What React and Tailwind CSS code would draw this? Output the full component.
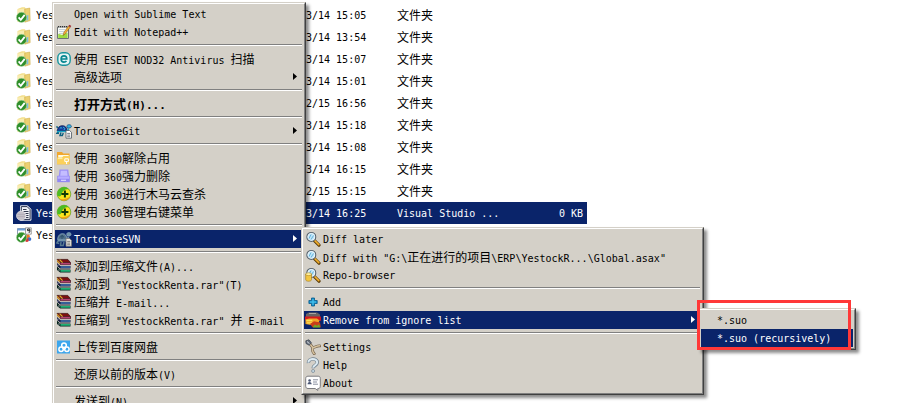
import React from 'react';
import clsx from 'clsx';

const archivos = [
    {fecha: '3/14 15:05', tipo: '文件夹'},
    {fecha: '3/14 13:54', tipo: '文件夹'},
    {fecha: '3/14 15:07', tipo: '文件夹'},
    {fecha: '3/14 15:01', tipo: '文件夹'},
    {fecha: '2/15 16:56', tipo: '文件夹'},
    {fecha: '3/14 15:18', tipo: '文件夹'},
    {fecha: '3/14 15:08', tipo: '文件夹'},
    {fecha: '3/14 16:15', tipo: '文件夹'},
    {fecha: '2/15 15:15', tipo: '文件夹'},
    {fecha: '3/14 16:25', tipo: 'Visual Studio ...', peso: '0 KB', icono: 'suo', activo: true},
    {fecha: '', tipo: '', icono: 'sln'},
];

const menuPrincipal = [
    {texto: 'Open with Sublime Text'},
    {texto: 'Edit with Notepad++', icono: 'notepad'},
    null,
    {texto: '使用 ESET NOD32 Antivirus 扫描', icono: 'eset'},
    {texto: '高级选项', flecha: true},
    null,
    {texto: '打开方式(H)...', negrita: true},
    null,
    {texto: 'TortoiseGit', icono: 'git', flecha: true},
    null,
    {texto: '使用 360解除占用', icono: 'carpeta360'},
    {texto: '使用 360强力删除', icono: 'borrar360'},
    {texto: '使用 360进行木马云查杀', icono: 'escudo360'},
    {texto: '使用 360管理右键菜单', icono: 'escudo360'},
    null,
    {texto: 'TortoiseSVN', icono: 'svn', flecha: true, activo: true},
    null,
    {texto: '添加到压缩文件(A)...', icono: 'rar'},
    {texto: '添加到 "YestockRenta.rar"(T)', icono: 'rar'},
    {texto: '压缩并 E-mail...', icono: 'rar'},
    {texto: '压缩到 "YestockRenta.rar" 并 E-mail', icono: 'rar'},
    null,
    {texto: '上传到百度网盘', icono: 'baidu'},
    null,
    {texto: '还原以前的版本(V)'},
    null,
    {texto: '发送到(N)', flecha: true},
];

const menuSvn = [
    {texto: 'Diff later', icono: 'lupa'},
    {texto: 'Diff with "G:\\正在进行的项目\\ERP\\YestockR...\\Global.asax"', icono: 'lupa'},
    {texto: 'Repo-browser', icono: 'repo'},
    null,
    {texto: 'Add', icono: 'agregar'},
    {texto: 'Remove from ignore list', icono: 'ignorar', flecha: true, activo: true},
    null,
    {texto: 'Settings', icono: 'ajustes'},
    {texto: 'Help', icono: 'ayuda'},
    {texto: 'About', icono: 'acerca'},
];

const menuIgnorar = [
    {texto: '*.suo'},
    {texto: '*.suo (recursively)', activo: true},
];

const marcaVerde = (
    <>
        <circle cx="5.5" cy="10.4" r="5.1" fill="#2f8f2b" stroke="#b5d8a8" strokeWidth=".5"/>
        <path d="M2.6 10.4l2.2 2.5 3.9-5" fill="none" stroke="#fff" strokeWidth="1.8"/>
    </>
);

const lupa = (
    <>
        <path d="M9.4 9.6l4.6 4.6" stroke="#5b3c08" strokeWidth="3.2" strokeLinecap="round"/>
        <path d="M9.8 9.6l4 4" stroke="#f0ae2c" strokeWidth="1.6" strokeLinecap="round"/>
        <circle cx="6.3" cy="5.9" r="4.4" fill="#bfe4f7" stroke="#59646e" strokeWidth="1.2"/>
        <circle cx="6.3" cy="5.9" r="3.5" fill="none" stroke="#f5fbff" strokeWidth=".8"/>
        <path d="M4 7.5l2-4M6 8.5l2.5-4" stroke="#5aaed8" strokeWidth=".9"/>
    </>
);

const dibujos = {
    carpeta: (
        <>
            <path d="M1.5 2L6 .3h3l.7 1.7v11L5 15H1.5z" fill="#f3df8c"/>
            <path d="M2 2.5L8 1.5v12.5l-6 .5z" fill="#f8ecb0"/>
            <path d="M8.8 2l5-1 .4 12.6-5.4 1.6z" fill="#ecd071" stroke="#c9a844" strokeWidth=".5"/>
            <path d="M10.5 8.5l1.8-.6v5l-1.8.8z" fill="#7dbde0"/>
            {marcaVerde}
        </>
    ),
    suo: (
        <>
            <path d="M4.5.8h7L15 4.3v10.9H4.5z" fill="#d8dbe6" stroke="#fff" strokeWidth=".8"/>
            <path d="M5.3 1.6h5.8l3 3v9.8H5.3z" fill="#f2f3f8" stroke="#29324f" strokeWidth="1"/>
            <path d="M7 4.5h3.5M7 6.5h5.5M9 8.5h3.5M10 10.5h2.5M10 12.5h2.5" stroke="#33384d" strokeWidth="1"/>
            <circle cx="5.2" cy="10.8" r="4.7" fill="#c5c1c9" stroke="#eae6ec" strokeWidth=".7"/>
            <path d="M1.4 9.4h7.6M1.2 11.6h8" stroke="#b3adb8" strokeWidth="1"/>
        </>
    ),
    sln: (
        <>
            <path d="M1.5 1.5h9v9h-9z" fill="#fff" stroke="#8f9bb0" strokeWidth="1"/>
            <path d="M1.5 1.5h9v2h-9z" fill="#6c9fd8"/>
            <path d="M9.5.8h5.8v6.4H9.5z" fill="#f7f7f7" stroke="#7b7b7b" strokeWidth=".7"/>
            <path d="M13.8 3.7h-2.2V2h2.2v2.9l-1 1" fill="none" stroke="#222" strokeWidth="1"/>
            <circle cx="12" cy="9.5" r="1.9" fill="#ed7a24"/>
            <circle cx="13.4" cy="12.1" r="1.9" fill="#3e73cf"/>
            <circle cx="10.9" cy="13" r="1.9" fill="#d53837"/>
            {marcaVerde}
        </>
    ),
    notepad: (
        <>
            <path d="M1.5 3h11v11.5h-11z" fill="#f9fbf6" stroke="#6d7274" strokeWidth="1"/>
            <path d="M2 2.7h10" stroke="#333" strokeWidth="1.2" strokeDasharray="1 1"/>
            <path d="M3 7.5h5M3 9.5h4M3 5.5h6" stroke="#bac8d2" strokeWidth=".8"/>
            <path d="M2.2 14V9.7l4 1.2 5.4-2.3V14z" fill="#9cdb42"/>
            <path d="M7 11.5l.8-3L12.5 2l1.7 1.2L9.2 10z" fill="#f4ad35" stroke="#7a561a" strokeWidth=".5"/>
            <path d="M12.5 2l1-1.3 1.8 1.2-1.1 1.3z" fill="#a2242c"/>
        </>
    ),
    eset: (
        <>
            <rect x="1.8" y="1.8" width="12.4" height="12.4" rx="4.6" fill="#e6f5f5" stroke="#17939c" strokeWidth="1.4"/>
            <path d="M5 8h5.8c0-2-1.1-3.1-2.8-3.1S5.1 6.2 5.1 8s1.2 3.1 2.9 3.1c1.2 0 1.9-.4 2.5-1.1" fill="none" stroke="#078791" strokeWidth="1.6"/>
        </>
    ),
    git: (
        <>
            <path d="M2 4.5l-1.7-.8M3 8l-2 2.2h2M5 9.5l-1 3h2.3l1-2.5" fill="none" stroke="#0c5f80" strokeWidth="1.4"/>
            <path d="M1.2 8C1.8 3.8 4 2.7 6.5 2.7S11 4.6 11.2 8z" fill="#14389b" stroke="#08174d" strokeWidth=".8"/>
            <path d="M3.8 5.5l1.2-1 1.3 1M7 4l1.8 1.3L8 7" fill="none" stroke="#38b9d9" strokeWidth="1"/>
            <path d="M1 8.5h9.5c2 0 1.8-2 2-3" fill="none" stroke="#18a5c5" strokeWidth="1.6"/>
            <path d="M10.8 3.3c0-2 4.4-2.2 4.6 0 .1 1.5-2 2-4 1.7z" fill="#37b6e1" stroke="#0b3d77" strokeWidth=".7"/>
            <path d="M10 7.5h3.5l2 1.8v5.9H10z" fill="#fff" stroke="#4b5560" strokeWidth=".8"/>
            <path d="M11.2 10.4h3M11.2 12.1h3M11.2 13.7h3" stroke="#596069" strokeWidth=".8"/>
        </>
    ),
    svn: (
        <>
            <path d="M2.5 9l-1.7 3 2.5.6M5 11l-.5 3.5h2.7L8 11" fill="none" stroke="#57798f" strokeWidth="1.5"/>
            <path d="M1.6 8.6C2 4 4.2 2.7 6.7 2.7s4 2 4.3 5.9z" fill="#52738c" stroke="#9ab7c7" strokeWidth=".7"/>
            <path d="M4 6.5L6 4.4l2.1 2M6 4.4v3.4" fill="none" stroke="#254863" strokeWidth=".9"/>
            <path d="M2 9.5h8.3c1.9 0 1.9-2 2-3.6" fill="none" stroke="#7194aa" strokeWidth="1.9"/>
            <path d="M10.6 3.2c0-2.2 4.3-2.3 4.6 0 .1 1.6-2 2.3-4 1.9z" fill="#6f94aa" stroke="#93b1c4" strokeWidth=".5"/>
            <path d="M10 7.5h3.5l2 1.8v5.9H10z" fill="#e9e6df" stroke="#777" strokeWidth=".8"/>
            <path d="M11.2 10.4h3M11.2 12.1h3M11.2 13.7h3" stroke="#686868" strokeWidth=".8"/>
        </>
    ),
    carpeta360: (
        <>
            <path d="M1 2h5l1.3 1.5h6.2v10.8H1z" fill="#f0a72d"/>
            <path d="M2.2 5h10.5v3H2.2z" fill="#fffbe2"/>
            <path d="M1 7.5h5L7.5 6H14l-1 8.3H1z" fill="#fbd05a"/>
            <path d="M2 8.6h4.5" stroke="#fff0a7" strokeWidth="1"/>
            <path d="M8.8 8.8h3.6v2.6H8.8zM10.6 11.4v2.6" fill="none" stroke="#fff" strokeWidth="1"/>
        </>
    ),
    borrar360: (
        <>
            <path d="M3.5 1.5h8.8l1 9H2.5z" fill="#9b91f4"/>
            <path d="M4.8 2.8h6.2l.6 5.2H4.2z" fill="#c4bdff"/>
            <path d="M1.2 7.8h12.6v6.4H1.2z" fill="#9288f2"/>
            <path d="M1.8 8.4h11.4v2.4H1.8z" fill="#b7adff"/>
            <path d="M5 12.3h5" stroke="#ddd8ff" strokeWidth="1.2"/>
        </>
    ),
    escudo360: (
        <>
            <circle cx="8" cy="8" r="6.8" fill="#fae51d" stroke="#3c9515" strokeWidth=".6"/>
            <path d="M1.2 8a6.8 6.8 0 0111.6-4.8C9 2.8 6.6 4.3 5.6 8c-.6 2.4-2.2 3-4 2.1A6 6 0 011.2 8z" fill="#4bbb24"/>
            <path d="M14.3 10.3A6.8 6.8 0 013 12.6c3.2 1.5 7.5.8 11.3-2.3z" fill="#ef9c1b"/>
            <path d="M7.9 4.6h2v2.5h2.5v2H9.9v2.5h-2V9.1H5.4v-2h2.5z" fill="#123b07"/>
        </>
    ),
    rar: (
        <>
            <path d="M1 1.4h10.8L14.5 4.6H4.2z" fill="#7d1010" stroke="#360707" strokeWidth=".7"/>
            <path d="M1 1.5l3.2 3.1v2L1 4z" fill="#c08424"/>
            <path d="M4.3 4.8h10.2v1.9H4.3z" fill="#d8508a" stroke="#3d0d1a" strokeWidth=".7"/>
            <path d="M1 5l3.2 3h10.3v2.5H4.2L1 7.8z" fill="#101638"/>
            <path d="M4.5 9h9.7" stroke="#5ca8f5" strokeWidth="1"/>
            <path d="M1 8.6l3.2 3h10.3v3H4.2L1 12z" fill="#08251e"/>
            <path d="M4.5 12.9h9.7" stroke="#27d48c" strokeWidth="1.4"/>
            <path d="M3.6 1.6l3 3" stroke="#d8b72e" strokeWidth="1.2"/>
            <path d="M1.8 6.7v1.2M3 11.3v1.3" stroke="#d9d9e8" strokeWidth=".9"/>
        </>
    ),
    baidu: (
        <>
            <path d="M1 1.5h13v13H1z" fill="#3ca6ed"/>
            <circle cx="8" cy="6.3" r="2.3" fill="none" stroke="#fff" strokeWidth="1.5"/>
            <circle cx="5.1" cy="10.2" r="2.2" fill="none" stroke="#fff" strokeWidth="1.5"/>
            <circle cx="10.9" cy="10.2" r="2.2" fill="none" stroke="#fff" strokeWidth="1.5"/>
            <path d="M6.5 9.7L8 8.2l1.8 1.6" fill="none" stroke="#fff" strokeWidth="1.2"/>
        </>
    ),
    lupa,
    repo: (
        <>
            {lupa}
            <path d="M.7 7v5.6c0 2.2 5.8 2.2 5.8 0V7z" fill="#f3c642" stroke="#a27713" strokeWidth=".6"/>
            <ellipse cx="3.6" cy="7.2" rx="2.9" ry="1.4" fill="#fff1a3" stroke="#a27713" strokeWidth=".5"/>
        </>
    ),
    agregar: (
        <>
            <path d="M6.5 4h3v2.5h2.7v3H9.5V12h-3V9.5H3.9v-3h2.6z" fill="#1691cb" stroke="#075b8c" strokeWidth=".8"/>
            <path d="M8 5v6M5 8h6" stroke="#51c6ee" strokeWidth="1"/>
        </>
    ),
    ignorar: (
        <>
            <path d="M1 2l3-1.5h8L15 2.5V5H1z" fill="#696464"/>
            <path d="M4 1.5h7" stroke="#aaa3a0" strokeWidth="1"/>
            <path d="M0 4.4h16v4.4h-3l-2-1.5H4L0 8.5z" fill="#d61a1c"/>
            <path d="M.5 7.6L4 6.4h8l2.6 2-1.5 3H8l-2 1.6-5.5-1z" fill="#f1a528"/>
            <path d="M1.3 8.5h6M2 10.8h5" stroke="#f9df56" strokeWidth="1.3"/>
            <path d="M5 12l4-2.7 6 1.2.8 4.7H7.5z" fill="#c83e1b"/>
            <path d="M8 14.5l2-2 2 1.3 2-1.5 1.3 3.2H8z" fill="#6fa92a"/>
        </>
    ),
    ajustes: (
        <>
            <path d="M4.8 4.6l3 4.2M7.7 8.7c2-.3 3.8-1.8 7.1-1.9M7.7 8.7c-.7 2.5-.4 4 1.5 6" fill="none" stroke="#715f48" strokeWidth="2.8" strokeLinecap="round"/>
            <path d="M4.8 4.6l3 4.2M7.7 8.7c2-.3 3.8-1.8 7.1-1.9M7.7 8.7c-.7 2.5-.4 4 1.5 6" fill="none" stroke="#d7c39f" strokeWidth="1.5" strokeLinecap="round"/>
            <path d="M.8 1.8L4 .8l2.4 3-2.2 2.4L1 4.5z" fill="#69717d" stroke="#353f4d" strokeWidth=".7"/>
            <path d="M2 2.5l2.5 2.2" stroke="#d5dce5" strokeWidth="1"/>
        </>
    ),
    ayuda: (
        <>
            <path d="M3.4 6C3 .6 12.6.6 12.3 5.6 12 8.4 8.2 8.2 8.2 11.2" fill="none" stroke="#71818e" strokeWidth="3.4"/>
            <path d="M3.4 5.6C3.2.8 12.4.8 12.2 5.5 12 8.2 8.2 8 8.2 10.8" fill="none" stroke="#dceaf2" strokeWidth="2"/>
            <circle cx="8.1" cy="14" r="1.5" fill="#cbdfea" stroke="#71818e" strokeWidth=".7"/>
        </>
    ),
    acerca: (
        <>
            <path d="M3 1.2h10.2c1.5 0 2.1 1 2.1 2.3v7.7c0 1.6-.8 2.3-2.1 2.3h-.4v2l-2.6-2H3C1.5 13.5.7 12.6.7 11.2V3.5C.7 2 1.6 1.2 3 1.2z" fill="#fff" stroke="#7c7c80" strokeWidth="1"/>
            <circle cx="4.6" cy="5.5" r="1.3" fill="#4c5774"/>
            <path d="M2.5 9.2c.2-3 4-3 4.2 0z" fill="#4c5774"/>
            <path d="M8 4.8h5M8 7h4M8 9.2h5" stroke="#7c8294" strokeWidth=".9"/>
        </>
    ),
};

function Icono({nombre}) {
    return (
        <svg viewBox="0 0 16 16" className="w-4 h-4 shrink-0" aria-hidden="true">
            {dibujos[nombre]}
        </svg>
    );
}

// Los ideogramas ocupan el doble que una letra latina
function Texto({children, negrita}) {
    return (
        <span className={clsx('inline-block pt-0.5 whitespace-pre', negrita ? 'text-[11px] font-bold' : 'text-[10px]')}>
            {children.split(/([\u4e00-\u9fff]+)/).map((parte, i) => (
                i % 2 === 1
                    ? <span key={i} className={negrita ? 'text-[13px]' : 'text-[12px]'}>{parte}</span>
                    : parte
            ))}
        </span>
    );
}

function Menu({items, etiqueta, sinIconos, className}) {
    return (
        <div
            role="menu"
            aria-label={etiqueta}
            className={clsx(
                'absolute border border-t-[#d4d0c8] border-l-[#d4d0c8] border-r-[#404040] border-b-[#404040] shadow-[3px_3px_3px_rgba(0,0,0,0.45)]',
                className
            )}
        >
            <div className="flex flex-col bg-[#d4d0c8] border border-t-white border-l-white border-r-[#808080] border-b-[#808080] p-px">
                {items.map((item, i) => item === null ? (
                    <div key={i} role="separator" className="h-0.5 mt-[3px] mb-1 mx-px border-t border-b border-t-[#808080] border-b-white"/>
                ) : (
                    <button
                        key={i}
                        type="button"
                        role="menuitem"
                        className={clsx(
                            'flex items-center h-[18px] leading-[18px] pr-1.5 text-left',
                            sinIconos ? 'pl-4' : 'pl-px gap-0.5',
                            item.activo ? 'bg-[#0a246a] text-white' : 'text-black'
                        )}
                    >
                        {!sinIconos && <Icono nombre={item.icono}/>}
                        <Texto negrita={item.negrita}>{item.texto}</Texto>
                        {item.flecha && (
                            <svg viewBox="0 0 4 7" className="w-1 h-[7px] ml-auto mb-0.5" aria-hidden="true">
                                <path d="M0 0l4 3.5L0 7z" fill="currentColor"/>
                            </svg>
                        )}
                    </button>
                ))}
            </div>
        </div>
    );
}

export default function App() {
    return (
        <main className="relative min-h-screen overflow-hidden bg-white pt-1 pl-[13px] text-black font-['DejaVu_Sans_Mono','Noto_Sans_CJK_SC',monospace]">
            <table className="w-full max-w-[574px] table-fixed border-collapse leading-[18px]">
                <colgroup>
                    <col className="w-[293px]"/>
                    <col className="w-[91px]"/>
                    <col/>
                    <col className="w-14"/>
                </colgroup>
                <tbody>
                {archivos.map((archivo, i) => (
                    <tr key={i} className={clsx('h-[22px]', archivo.activo && 'bg-[#0a246a] text-white')}>
                        <td className="p-0 pl-[3px]">
                            <div className="flex items-center gap-1">
                                <Icono nombre={archivo.icono || 'carpeta'}/>
                                <Texto>Yes</Texto>
                            </div>
                        </td>
                        <td className="p-0"><Texto>{archivo.fecha}</Texto></td>
                        <td className="p-0"><Texto>{archivo.tipo}</Texto></td>
                        <td className="p-0 pr-1 text-right"><Texto>{archivo.peso || ''}</Texto></td>
                    </tr>
                ))}
                </tbody>
            </table>

            <Menu items={menuPrincipal} etiqueta="Menú contextual" className="left-[52px] top-0.5 w-[254px]"/>
            <Menu items={menuSvn} etiqueta="TortoiseSVN" className="left-[301px] top-[227px] w-[403px]"/>
            <Menu items={menuIgnorar} etiqueta="Remove from ignore list" sinIconos className="left-[698px] top-[308px] w-[158px]"/>

            {/* recuadro rojo sobre las opciones de *.suo */}
            <div className="absolute left-[697px] top-[300px] w-[154px] h-[50px] border-3 border-[#ff3838] pointer-events-none"/>
        </main>
    );
}
